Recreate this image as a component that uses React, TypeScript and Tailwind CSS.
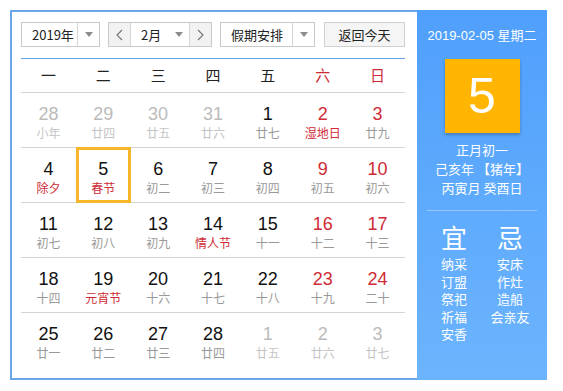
import React from "react";

type Day = { n: number; lunar: string; dim?: boolean; red?: boolean; redLunar?: boolean; sel?: boolean };

const WEEK = ["一", "二", "三", "四", "五", "六", "日"];

const ROWS: Day[][] = [
  [
    { n: 28, lunar: "小年", dim: true },
    { n: 29, lunar: "廿四", dim: true },
    { n: 30, lunar: "廿五", dim: true },
    { n: 31, lunar: "廿六", dim: true },
    { n: 1, lunar: "廿七" },
    { n: 2, lunar: "湿地日", red: true, redLunar: true },
    { n: 3, lunar: "廿九", red: true },
  ],
  [
    { n: 4, lunar: "除夕", redLunar: true },
    { n: 5, lunar: "春节", redLunar: true, sel: true },
    { n: 6, lunar: "初二" },
    { n: 7, lunar: "初三" },
    { n: 8, lunar: "初四" },
    { n: 9, lunar: "初五", red: true },
    { n: 10, lunar: "初六", red: true },
  ],
  [
    { n: 11, lunar: "初七" },
    { n: 12, lunar: "初八" },
    { n: 13, lunar: "初九" },
    { n: 14, lunar: "情人节", redLunar: true },
    { n: 15, lunar: "十一" },
    { n: 16, lunar: "十二", red: true },
    { n: 17, lunar: "十三", red: true },
  ],
  [
    { n: 18, lunar: "十四" },
    { n: 19, lunar: "元宵节", redLunar: true },
    { n: 20, lunar: "十六" },
    { n: 21, lunar: "十七" },
    { n: 22, lunar: "十八" },
    { n: 23, lunar: "十九", red: true },
    { n: 24, lunar: "二十", red: true },
  ],
  [
    { n: 25, lunar: "廿一" },
    { n: 26, lunar: "廿二" },
    { n: 27, lunar: "廿三" },
    { n: 28, lunar: "廿四" },
    { n: 1, lunar: "廿五", dim: true },
    { n: 2, lunar: "廿六", dim: true },
    { n: 3, lunar: "廿七", dim: true },
  ],
];

const YI = ["纳采", "订盟", "祭祀", "祈福", "安香"];
const JI = ["安床", "作灶", "造船", "会亲友"];

function Caret() {
  return (
    <svg width="8" height="5" viewBox="0 0 8 5">
      <path d="M0 0h8L4 5z" fill="#8c8c8c" />
    </svg>
  );
}

function Chevron({ dir }: { dir: "l" | "r" }) {
  return (
    <svg width="7" height="12" viewBox="0 0 7 12">
      <path d={dir === "l" ? "M6 1L1 6l5 5" : "M1 1l5 5-5 5"} fill="none" stroke="#777" strokeWidth="1.2" />
    </svg>
  );
}

function Select({ label, w, textW }: { label: string; w: string; textW: string }) {
  return (
    <div className={`flex h-[25px] ${w} border border-[#c9c9c9] bg-white`}>
      <div className={`flex ${textW} items-center pl-[10px] text-[13px] text-[#222]`}>{label}</div>
      <div className="flex flex-1 items-center justify-center border-l border-[#d6d6d6]">
        <Caret />
      </div>
    </div>
  );
}

function Cell({ d }: { d: Day }) {
  const numColor = d.dim ? "text-[#bbbbbb]" : d.red ? "text-[#cf2b36]" : "text-[#111]";
  const lunColor = d.dim ? "text-[#c4c4c4]" : d.redLunar ? "text-[#cf2b36]" : "text-[#999]";
  return (
    <div className="relative flex flex-col items-center pt-[11px]">
      {d.sel && <div className="absolute inset-x-0 -top-px -bottom-px border-[3px] border-[#f6b62a]" />}
      <div className={`font-['Liberation_Sans',Arial,sans-serif] text-[18px] leading-[20px] ${numColor}`}>{d.n}</div>
      <div className={`mt-px text-[12px] leading-[16px] ${lunColor}`}>{d.lunar}</div>
    </div>
  );
}

export default function App() {
  return (
    <div className="min-h-[391px] bg-white pl-[10px] pt-[10px] font-['Noto_Sans_CJK_SC','Noto_Sans',sans-serif]">
      <div className="flex h-[370px] w-[537px]">
        {/* Calendar */}
        <div className="w-[407px] border-y-2 border-l-2 border-[#6aa5e8] pl-[9px] pr-[12px] pt-[10px]">
          <div className="flex items-center">
            <Select label="2019年" w="w-[79px]" textW="w-[55px]" />
            <div className="ml-[8px] flex h-[25px] w-[104px] border border-[#c9c9c9] bg-white">
              <div className="flex w-[21px] items-center justify-center bg-[#f2f2f2]">
                <Chevron dir="l" />
              </div>
              <div className="flex w-[60px] items-center border-x border-[#d6d6d6] pl-[10px] text-[13px] text-[#222]">
                <span className="flex-1">2月</span>
                <span className="mr-[6px] flex"><Caret /></span>
              </div>
              <div className="flex flex-1 items-center justify-center bg-[#f2f2f2]">
                <Chevron dir="r" />
              </div>
            </div>
            <div className="ml-[8px]">
              <Select label="假期安排" w="w-[95px]" textW="w-[71px]" />
            </div>
            <div className="ml-auto flex h-[25px] w-[81px] items-center justify-center border border-[#d0d0d0] bg-[#f5f5f5] text-[13px] text-[#222]">
              返回今天
            </div>
          </div>

          <div className="mt-[11px] border-t border-[#6aa5e8]">
            <div className="grid h-[34px] grid-cols-7 items-center border-b border-[#d4d4d4] text-[15px]">
              {WEEK.map((w, i) => (
                <div key={w} className={`text-center ${i >= 5 ? "text-[#cf2b36]" : "text-[#222]"}`}>
                  {w}
                </div>
              ))}
            </div>
            {ROWS.map((row, r) => (
              <div
                key={r}
                className={`grid h-[55px] grid-cols-7 ${r < ROWS.length - 1 ? "border-b border-[#d4d4d4]" : ""}`}
              >
                {row.map((d, i) => (
                  <Cell key={i} d={d} />
                ))}
              </div>
            ))}
          </div>
        </div>

        {/* Side panel */}
        <div className="flex w-[130px] flex-col items-center bg-gradient-to-b from-[#4f9ffc] to-[#6cb4fd] pt-[17px] text-white">
          <div className="font-['Liberation_Sans','Noto_Sans_CJK_SC',sans-serif] text-[13px] leading-[18px]">
            2019-02-05 星期二
          </div>
          <div className="mt-[14px] flex h-[74px] w-[75px] items-center justify-center bg-[#ffb502] font-['Liberation_Sans',Arial,sans-serif] text-[50px] leading-none shadow-[0_2px_3px_rgba(0,0,0,0.25)]">
            5
          </div>
          <div className="mt-[7px] text-center text-[13px] leading-[19px]">
            <div>正月初一</div>
            <div>己亥年 【猪年】</div>
            <div>丙寅月 癸酉日</div>
          </div>
          <div className="mt-[13px] h-px w-[110px] bg-[#93c7ff]" />
          <div className="mt-[11px] flex w-full justify-center gap-[26px]">
            <div className="flex w-[30px] flex-col items-center">
              <div className="text-[26px] leading-[30px]">宜</div>
              <div className="mt-[3px] flex flex-col items-center text-[13px] leading-[17.5px]">
                {YI.map((t) => (
                  <div key={t}>{t}</div>
                ))}
              </div>
            </div>
            <div className="flex w-[30px] flex-col items-center">
              <div className="text-[26px] leading-[30px]">忌</div>
              <div className="mt-[3px] flex flex-col items-center whitespace-nowrap text-[13px] leading-[17.5px]">
                {JI.map((t) => (
                  <div key={t}>{t}</div>
                ))}
              </div>
            </div>
          </div>
        </div>
      </div>
    </div>
  );
}
